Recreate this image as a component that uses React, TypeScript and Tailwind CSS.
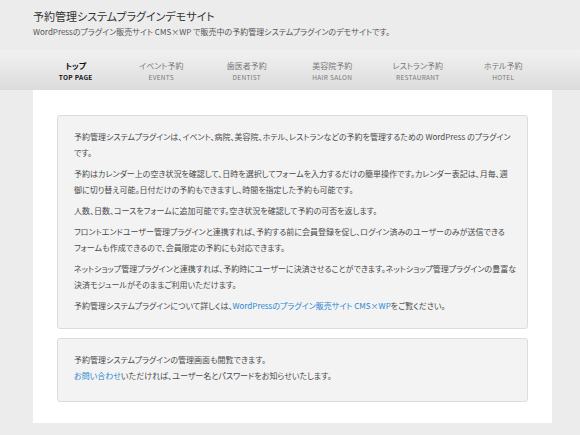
import React from 'react'

const navItems = [
  { ja: 'トップ', en: 'TOP PAGE', active: true },
  { ja: 'イベント予約', en: 'EVENTS' },
  { ja: '歯医者予約', en: 'DENTIST' },
  { ja: '美容院予約', en: 'HAIR SALON' },
  { ja: 'レストラン予約', en: 'RESTAURANT' },
  { ja: 'ホテル予約', en: 'HOTEL' },
]

export default function App() {
  return (
    <div className="w-[580px] h-[435px] overflow-hidden bg-[#ececec] text-[#444] font-['Noto_Sans_CJK_JP','Noto_Sans',sans-serif] [font-feature-settings:'palt']">
      {/* site header */}
      <header className="h-[50px] px-[33px] pt-[8px]">
        <h1 className="text-[11px] leading-[17px] text-[#333]">予約管理システムプラグインデモサイト</h1>
        <p className="text-[8px] leading-[12px] mt-[1px] text-[#555]">
          WordPressのプラグイン販売サイト CMS×WP で販売中の予約管理システムプラグインのデモサイトです。
        </p>
      </header>

      {/* global nav */}
      <nav className="h-[40px] bg-gradient-to-b from-[#f1f1f1] to-[#dcdcdc]">
        <ul className="flex px-[33px]">
          {navItems.map((item) => (
            <li key={item.en} className="w-[85.5px] flex flex-col items-center pt-[9px]">
              <span className={`text-[8px] leading-[13px] ${item.active ? 'font-bold text-[#111]' : 'text-[#777]'}`}>
                {item.ja}
              </span>
              <span className={`text-[6.5px] leading-[11px] tracking-[0.3px] ${item.active ? 'font-bold text-[#111]' : 'text-[#777]'}`}>
                {item.en}
              </span>
            </li>
          ))}
        </ul>
      </nav>

      <main className="ml-[33px] w-[519px] h-[333px] bg-white pt-[25px] px-[24px]">
        <section className="bg-[#f3f3f3] border border-[#dcdcdc] rounded-[3px] pl-[16px] pr-[6px] pt-[13px] pb-[9px] text-[8px] leading-[16px] text-[#4a4a4a]">
          <p className="mb-[5px]">
            予約管理システムプラグインは、イベント、病院、美容院、ホテル、レストランなどの予約を管理するための WordPress のプラグイン
            <br />
            です。
          </p>
          <p className="mb-[5px]">
            予約はカレンダー上の空き状況を確認して、日時を選択してフォームを入力するだけの簡単操作です。カレンダー表記は、月毎、週
            <br />
            御に切り替え可能。日付だけの予約もできますし、時間を指定した予約も可能です。
          </p>
          <p className="mb-[5px]">人数、日数、コースをフォームに追加可能です。空き状況を確認して予約の可否を返します。</p>
          <p className="mb-[5px]">
            フロントエンドユーザー管理プラグインと連携すれば、予約する前に会員登録を促し、ログイン済みのユーザーのみが送信できる
            <br />
            フォームも作成できるので、会員限定の予約にも対応できます。
          </p>
          <p className="mb-[5px]">
            ネットショップ管理プラグインと連携すれば、予約時にユーザーに決済させることができます。ネットショップ管理プラグインの豊富な
            <br />
            決済モジュールがそのままご利用いただけます。
          </p>
          <p className="mb-[5px]">
            予約管理システムプラグインについて詳しくは、
            <a href="#" className="text-[#2a87d0]">WordPressのプラグイン販売サイト CMS×WP</a>
            をご覧ください。
          </p>
        </section>

        <section className="mt-[9px] bg-[#f3f3f3] border border-[#dcdcdc] rounded-[3px] pl-[16px] pr-[12px] pt-[13px] pb-[17px] text-[8px] leading-[16px] text-[#4a4a4a]">
          <p>
            予約管理システムプラグインの管理画面も閲覧できます。
            <br />
            <a href="#" className="text-[#2a87d0]">お問い合わせ</a>
            いただければ、ユーザー名とパスワードをお知らせいたします。
          </p>
        </section>
      </main>
    </div>
  )
}
